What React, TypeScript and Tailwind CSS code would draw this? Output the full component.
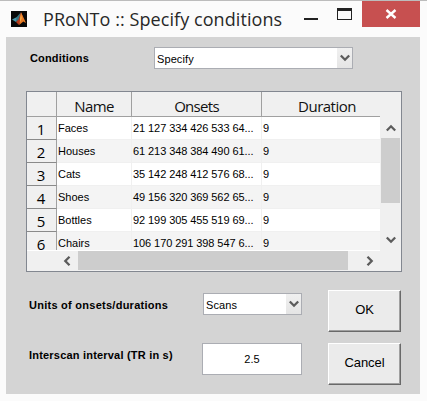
import type { ReactNode } from "react";

const rows = [
  { name: "Faces", onsets: "21 127 334 426 533 64...", duration: "9" },
  { name: "Houses", onsets: "61 213 348 384 490 61...", duration: "9" },
  { name: "Cats", onsets: "35 142 248 412 576 68...", duration: "9" },
  { name: "Shoes", onsets: "49 156 320 369 562 65...", duration: "9" },
  { name: "Bottles", onsets: "92 199 305 455 519 69...", duration: "9" },
  { name: "Chairs", onsets: "106 170 291 398 547 6...", duration: "9" },
];

function Chevron({ className = "" }: { className?: string }) {
  return (
    <svg className={`block shrink-0 ${className}`} width="10" height="8" viewBox="0 0 10 8">
      <path d="M0.8 1.5 L5 5.7 L9.2 1.5" fill="none" stroke="#5c5c5c" strokeWidth="2.3" />
    </svg>
  );
}

function Select({ value, className }: { value: string; className: string }) {
  return (
    <div className={`flex h-[22px] border border-[#abadb3] bg-white text-[11px] leading-[22px] ${className}`}>
      <span className="flex-1 pl-[2px] tracking-[0.1px]">{value}</span>
      <span className="flex w-[15px] items-center justify-center bg-linear-to-b from-[#f0f0f0] to-[#e5e5e5]">
        <Chevron />
      </span>
    </div>
  );
}

function PushButton({ children }: { children: ReactNode }) {
  return (
    <button className="block h-[42px] w-[73px] border border-t-white border-r-[#696969] border-b-[#696969] border-l-white bg-[#ebebeb] pb-[3px] text-center text-[13px] leading-[37px] tracking-[-0.1px] shadow-[inset_-1px_-1px_0_#a0a0a0]">
      {children}
    </button>
  );
}

function MatlabIcon() {
  return (
    <svg className="mt-[10px] ml-[11px] block shrink-0" width="16" height="16" viewBox="0 0 16 16">
      <rect width="16" height="16" fill="#090909" />
      <path d="M1 8.5 L5.5 6.3 L7.8 7.6 L5 11 Z" fill="#4697ad" />
      <path d="M5.5 6.3 L10 1.3 L8.3 8.5 L5 11 Z" fill="#397481" />
      <path d="M5 11 L7.5 8.5 L10 1.2 L11.5 5 L8 14 Z" fill="#b5391c" />
      <path d="M10 1.2 L12 5.5 L15 12 L12.3 10.5 L8.2 14 L9.4 8 Z" fill="#e77924" />
      <path d="M10 2.5 L10.8 7 L8.8 12 L9.1 7 Z" fill="#f5ad4a" />
    </svg>
  );
}

function TitleBar() {
  return (
    <header className="flex h-9 shrink-0 items-start">
      <MatlabIcon />
      <h1 className="mt-[6px] ml-[16px] w-[250px] shrink-0 whitespace-nowrap font-['Open_Sans','Noto_Sans',sans-serif] text-[18px] leading-[24px] tracking-[0.07px] text-[#282828]">
        PRoNTo :: Specify conditions
      </h1>
      <div className="mt-[17px] ml-[11px] h-[2px] w-[14px] bg-[#222]" />
      <div className="mt-[7px] ml-[19px] h-[12px] w-[15px] border border-t-[3px] border-[#222]" />
      <div className="ml-[10px] flex h-[26px] w-[58px] items-center justify-center bg-[#c75050]">
        <svg width="12" height="10" viewBox="0 0 12 10" className="block">
          <path d="M1.5 1 L10.5 9 M10.5 1 L1.5 9" stroke="#fff" strokeWidth="2.4" />
        </svg>
      </div>
    </header>
  );
}

function ConditionsTable() {
  return (
    <div className="mt-[22px] ml-[20px] h-[181px] w-[376px] border border-[#828790] bg-[#f0f0f0]">
      <div className="flex h-[25px] font-['Open_Sans','Noto_Sans',sans-serif] text-[15px] leading-[28px] text-[#111]">
        <div className="w-[30px] border-r border-b border-[#a0a0a0]" />
        <div className="w-[75px] border-r border-b border-[#a0a0a0] text-center tracking-[-0.6px]">Name</div>
        <div className="w-[130px] border-r border-b border-[#a0a0a0] text-center tracking-[-0.7px]">Onsets</div>
        <div className="w-[118px] border-b border-[#a0a0a0] pl-[12px] text-center tracking-[-0.5px]">Duration</div>
      </div>
      <div className="flex h-[134px]">
        <div className="h-[134px] w-[353px] overflow-hidden border-b border-white">
          {rows.map((row, i) => (
            <div key={row.name} className={`flex h-[23px] text-[11px] leading-[23px] ${i % 2 ? "bg-[#f4f4f4]" : "bg-white"}`}>
              <div className="w-[30px] border-r border-b border-[#a0a0a0] border-b-[#8a8a8a] bg-[#f0f0f0] pr-px text-center font-['Open_Sans','Noto_Sans',sans-serif] text-[15px] leading-[24px]">
                {i + 1}
              </div>
              <div className="w-[75px] border-r border-b border-[#f0f0f0] pl-px">{row.name}</div>
              <div className="w-[130px] border-r border-b border-[#f0f0f0] pl-px tracking-[-0.08px] whitespace-nowrap">{row.onsets}</div>
              <div className="w-[118px] border-b border-[#f0f0f0] pl-px">{row.duration}</div>
            </div>
          ))}
        </div>
        <div className="ml-px flex w-[19px] flex-col items-center bg-[#f0f0f0]">
          <div className="flex h-[21px] items-center justify-center"><Chevron className="rotate-180" /></div>
          <div className="h-[65px] w-full bg-[#cdcdcd]" />
          <div className="mt-auto mb-[7px]"><Chevron /></div>
        </div>
      </div>
      <div className="flex h-[19px] items-center">
        <Chevron className="ml-[35px] rotate-90" />
        <div className="ml-[6px] h-full w-[270px] bg-[#cdcdcd]" />
        <Chevron className="ml-[17px] -rotate-90" />
      </div>
    </div>
  );
}

export default function App() {
  return (
    <main className="flex h-[401px] w-[427px] flex-col overflow-hidden border-t border-[#bcbcbc] bg-[#fbfbfb] font-['Liberation_Sans',Arial,sans-serif] text-black">
      <TitleBar />
      <section className="ml-[6px] h-[357px] w-[414px] bg-[#d4d4d4]">
        <div className="flex h-[32px] pt-[10px]">
          <label className="w-[148px] pl-[24px] text-[11px] leading-[23px] font-bold tracking-[0.15px]">Conditions</label>
          <Select value="Specify" className="w-[199px]" />
        </div>
        <ConditionsTable />
        <div className="mt-[18px] flex h-[42px]">
          <label className="mt-[3px] w-[197px] pl-[23px] text-[11px] leading-[24px] font-bold tracking-[0.26px] whitespace-nowrap">Units of onsets/durations</label>
          <Select value="Scans" className="mt-[3px] mr-[26px] w-[99px]" />
          <PushButton>OK</PushButton>
        </div>
        <div className="mt-[11px] flex h-[42px]">
          <label className="w-[196px] pl-[23px] text-[11px] leading-[24px] font-bold tracking-[0.2px] whitespace-nowrap">Interscan interval (TR in s)</label>
          <div className="mr-[26px] h-[32px] w-[100px] border border-[#abadb3] bg-white text-center text-[11px] leading-[31px]">2.5</div>
          <PushButton>Cancel</PushButton>
        </div>
      </section>
    </main>
  );
}
